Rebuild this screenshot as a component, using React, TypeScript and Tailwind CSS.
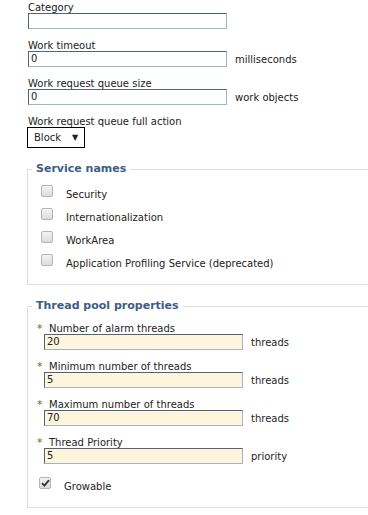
const TextField = ({ label, value, unit, required }: { label: string; value: string; unit?: string; required?: boolean }) => (
  <div className="flex flex-col">
    <label className="flex items-end h-[11px] leading-[11px]">
      {required && <span className="text-[#6b6a1c] text-[11px] w-[12px] -ml-[7px] leading-[10px]">*</span>}
      {label}
    </label>
    <div className="flex items-center">
      <div
        className={`w-[199px] h-[16px] border border-t-[#4f6479] border-l-[#4f6479] border-r-[#a3b3c3] border-b-[#a3b3c3] pl-[2px] leading-[14px] ${
          required ? "bg-[#fef6dc]" : "bg-white"
        }`}
      >
        {value}
      </div>
      {unit && <span className="ml-[8px]">{unit}</span>}
    </div>
  </div>
);

const Checkbox = ({ checked }: { checked?: boolean }) => (
  <div className="w-[12px] h-[12px] rounded-[2px] border border-[#b4b4b4] bg-gradient-to-b from-[#f4f4f4] to-[#dcdcdc] flex items-center justify-center">
    {checked && (
      <svg width="9" height="8" viewBox="0 0 9 8">
        <path d="M1 4.2 L3.4 6.6 L8 1.2" stroke="#333" strokeWidth="1.8" fill="none" />
      </svg>
    )}
  </div>
);

const services = ["Security", "Internationalization", "WorkArea", "Application Profiling Service (deprecated)"];

export default function App() {
  return (
    <div className="w-[368px] h-[515px] bg-white overflow-hidden text-[#222] text-[10px] font-['DejaVu_Sans',Verdana,sans-serif]">
      <div className="pl-[28px] pt-[2px] flex flex-col gap-[11px]">
        <TextField label="Category" value="" />
        <TextField label="Work timeout" value="0" unit="milliseconds" />
        <TextField label="Work request queue size" value="0" unit="work objects" />
        <div className="flex flex-col">
          <label className="h-[11px] leading-[11px]">Work request queue full action</label>
          <div className="-ml-[1px] w-[58px] h-[21px] border border-black flex items-center pl-[6px] gap-[11px]">
            <span>Block</span>
            <span className="text-[8px]">▼</span>
          </div>
        </div>
      </div>

      <fieldset className="ml-[27px] mt-[14px] w-[360px] border border-[#dedede]">
        <legend className="ml-[4px] px-[4px] text-[11px] font-bold text-[#3d5d86] leading-[14px]">Service names</legend>
        <div className="flex flex-col gap-[11px] mt-[9px] pl-[13px] pb-[18px]">
          {services.map((s) => (
            <div key={s} className="flex items-center h-[12px]">
              <Checkbox />
              <span className="ml-[13px] mt-[6px]">{s}</span>
            </div>
          ))}
        </div>
      </fieldset>

      <fieldset className="ml-[27px] mt-[14px] w-[360px] h-[209px] border border-[#dedede]">
        <legend className="ml-[4px] px-[4px] text-[11px] font-bold text-[#3d5d86] leading-[14px]">Thread pool properties</legend>
        <div className="flex flex-col gap-[11px] mt-[10px] pl-[16px]">
          <TextField required label="Number of alarm threads" value="20" unit="threads" />
          <TextField required label="Minimum number of threads" value="5" unit="threads" />
          <TextField required label="Maximum number of threads" value="70" unit="threads" />
          <TextField required label="Thread Priority" value="5" unit="priority" />
        </div>
        <div className="flex items-center mt-[7px] pl-[11px]">
          <Checkbox checked />
          <span className="ml-[13px] mt-[8px]">Growable</span>
        </div>
      </fieldset>
    </div>
  );
}
